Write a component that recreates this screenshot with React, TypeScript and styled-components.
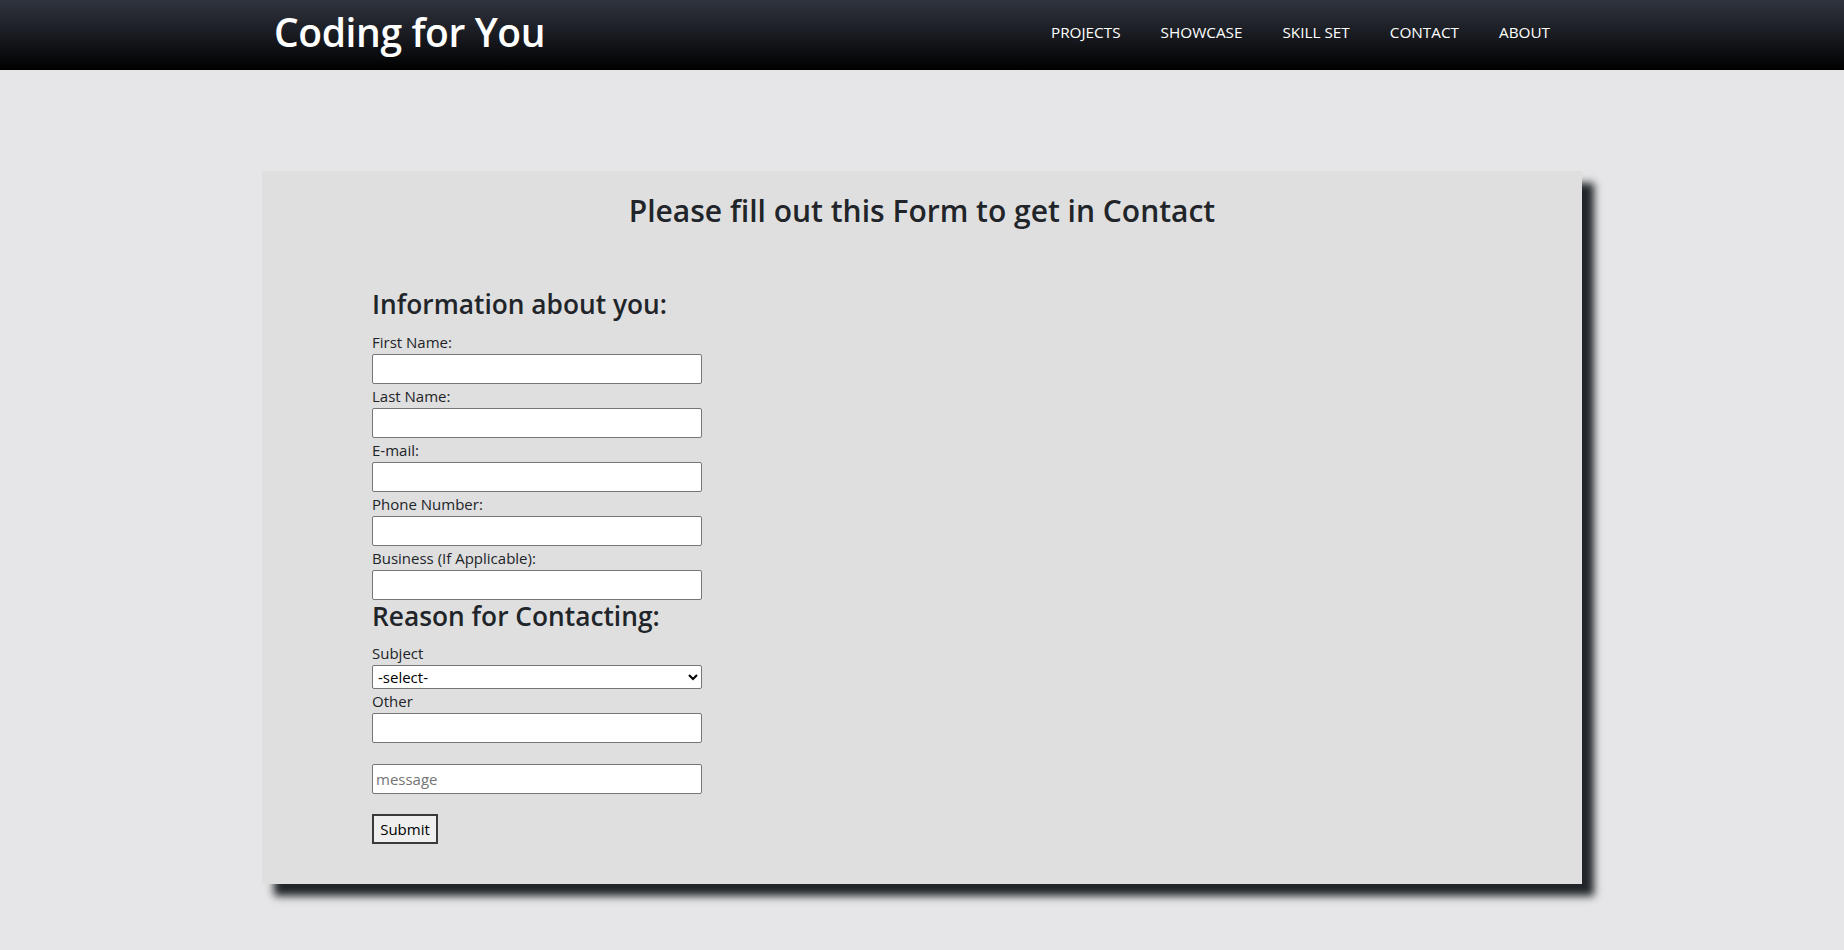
import React from "react";
import styled, { createGlobalStyle } from "styled-components";

const GlobalStyle = createGlobalStyle`
  * { box-sizing: border-box; }
  html, body {
    margin: 0;
    padding: 0;
    background: #e6e6e8;
    font-family: "Open Sans", "Noto Sans", sans-serif;
    color: #212529;
  }
`;

const Header = styled.header`
  height: 70px;
  background: linear-gradient(to bottom, #30343e 0%, #14161b 60%, #000 100%);
`;

const HeaderInner = styled.div`
  width: 1320px;
  margin: 0 auto;
  padding: 0 12px;
  height: 100%;
  display: flex;
  align-items: center;
  justify-content: space-between;
`;

const Brand = styled.a`
  font-size: 39px;
  font-weight: 600;
  color: #fff;
  text-decoration: none;
  line-height: 1;
  margin-top: -8px;
  letter-spacing: -0.4px;
`;

const NavList = styled.ul`
  list-style: none;
  margin: 0;
  padding: 0;
  display: flex;
  align-items: center;
  margin-top: -6px;
`;

const NavLink = styled.a`
  display: block;
  padding: 0 20px;
  font-size: 15.3px;
  color: #fff;
  text-decoration: none;
  text-transform: uppercase;
  line-height: 24px;
`;

const Main = styled.main`
  padding: 101px 0 60px;
`;

const Card = styled.section`
  width: 1320px;
  margin: 0 auto;
  background: #dfdfdf;
  box-shadow: 12px 12px 8px #212529;
  padding: 21px 110px 40px;
`;

const Title = styled.h2`
  margin: 0;
  font-size: 30px;
  font-weight: 600;
  line-height: 38px;
  text-align: center;
`;

const Form = styled.form`
  display: flex;
  flex-direction: column;
  align-items: flex-start;
  margin-top: 58px;
`;

const SectionHeading = styled.h3`
  margin: 0 0 8px;
  font-size: 26.3px;
  font-weight: 600;
  line-height: 33.6px;
`;

const Label = styled.label`
  display: block;
  font-size: 15px;
  line-height: 24px;
`;

const TextInput = styled.input<{ $gap?: number }>`
  width: 330px;
  height: 30px;
  margin: ${(p) => (p.$gap ? `${p.$gap}px 0 0` : "0")};
  padding: 1px 3px;
  border: 1px solid #767676;
  border-radius: 2px;
  background: #fff;
  font-family: inherit;
  font-size: 15px;
  color: #212529;
  &::placeholder { color: #757575; }
`;

const Select = styled.select`
  width: 330px;
  height: 24px;
  padding: 0 1px;
  border: 1px solid #767676;
  border-radius: 2px;
  background: #fff;
  font-family: inherit;
  font-size: 15px;
  color: #000;
`;

const SubmitButton = styled.button`
  margin-top: 20px;
  width: 66px;
  height: 30px;
  padding: 0;
  border: 2px solid #3a3a3a;
  background: #efefef;
  font-family: inherit;
  font-size: 15px;
  color: #000;
`;

const navItems = ["Projects", "Showcase", "Skill Set", "Contact", "About"];

const infoFields = [
  { id: "first", label: "First Name:" },
  { id: "last", label: "Last Name:" },
  { id: "email", label: "E-mail:" },
  { id: "phone", label: "Phone Number:" },
  { id: "business", label: "Business (If Applicable):" },
];

export default function App() {
  return (
    <>
      <GlobalStyle />
      <Header>
        <HeaderInner>
          <Brand href="#">Coding for You</Brand>
          <NavList>
            {navItems.map((n) => (
              <li key={n}>
                <NavLink href="#">{n}</NavLink>
              </li>
            ))}
          </NavList>
        </HeaderInner>
      </Header>
      <Main>
        <Card>
          <Title>Please fill out this Form to get in Contact</Title>
          <Form onSubmit={(e) => e.preventDefault()}>
            <SectionHeading>Information about you:</SectionHeading>
            {infoFields.map((f) => (
              <React.Fragment key={f.id}>
                <Label htmlFor={f.id}>{f.label}</Label>
                <TextInput id={f.id} type="text" />
              </React.Fragment>
            ))}
            <SectionHeading>Reason for Contacting:</SectionHeading>
            <Label htmlFor="subject">Subject</Label>
            <Select id="subject" defaultValue="">
              <option value="">-select-</option>
              <option value="web">Website</option>
              <option value="app">Application</option>
              <option value="other">Other</option>
            </Select>
            <Label htmlFor="other">Other</Label>
            <TextInput id="other" type="text" />
            <TextInput id="message" type="text" placeholder="message" $gap={21} />
            <SubmitButton type="submit">Submit</SubmitButton>
          </Form>
        </Card>
      </Main>
    </>
  );
}
